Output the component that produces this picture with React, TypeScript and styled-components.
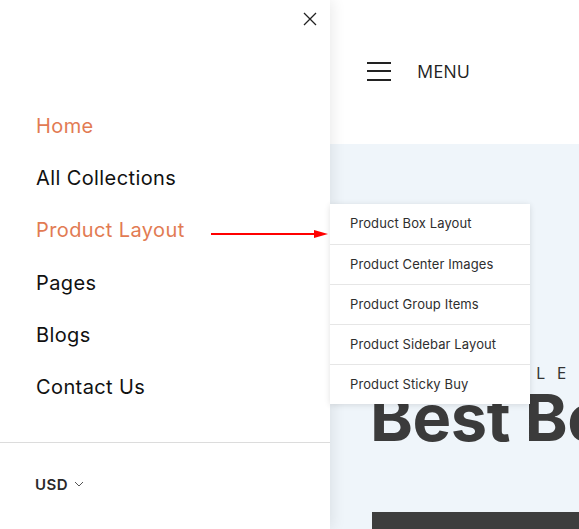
import React from "react";
import styled, { createGlobalStyle } from "styled-components";

const Global = createGlobalStyle`
  html, body { margin: 0; padding: 0; }
  body { width: 579px; height: 529px; overflow: hidden; background: #fff; }
  * { box-sizing: border-box; }
`;

const Page = styled.div`
  position: relative;
  width: 579px;
  height: 529px;
  overflow: hidden;
  display: flex;
  flex-direction: column;
`;

const SiteHeader = styled.header`
  height: 144px;
  flex: none;
  display: flex;
  align-items: center;
  padding: 0 0 2px 367px;
  gap: 26px;
  background: #fff;
`;

const Burger = styled.span`
  width: 24px;
  height: 19px;
  display: flex;
  flex-direction: column;
  justify-content: space-between;
  & > i {
    display: block;
    height: 2px;
    background: #222;
  }
`;

const MenuLabel = styled.span`
  font-family: "Open Sans", sans-serif;
  font-size: 18px;
  color: #222;
  line-height: 1;
`;

const Hero = styled.section`
  flex: 1;
  background: #eff5fa;
  display: flex;
  flex-direction: column;
  padding: 219px 0 0 370px;
`;

const Kicker = styled.div`
  align-self: flex-start;
  margin-left: 166px;
  font-family: "Open Sans", sans-serif;
  font-size: 17px;
  letter-spacing: 12px;
  color: #333;
  line-height: 20px;
  white-space: nowrap;
`;

const HeroTitle = styled.h1`
  margin: 0;
  font-family: "Inter", sans-serif;
  font-weight: 700;
  font-size: 65px;
  letter-spacing: -0.5px;
  line-height: 70px;
  color: #3b3b3b;
  white-space: nowrap;
`;

const HeroButton = styled.div`
  margin: 59px 0 0 2px;
  height: 40px;
  width: 240px;
  background: #3e3e3e;
`;

const Drawer = styled.aside`
  position: absolute;
  left: 0;
  top: 0;
  width: 330px;
  height: 529px;
  background: #fff;
  box-shadow: 2px 0 14px rgba(0, 0, 0, 0.09);
  display: flex;
  flex-direction: column;
`;

const CloseRow = styled.div`
  height: 99.5px;
  display: flex;
  justify-content: flex-end;
  padding: 12px 13px 0 0;
`;

const CloseBtn = styled.span`
  width: 14px;
  height: 14px;
  display: block;
`;

const NavList = styled.nav`
  display: flex;
  flex-direction: column;
  padding-left: 36px;
  flex: 1;
`;

const NavItem = styled.a<{ $active?: boolean }>`
  display: block;
  height: 52.4px;
  line-height: 52.4px;
  font-family: "Inter", sans-serif;
  font-size: 20px;
  letter-spacing: 0.4px;
  color: ${(p) => (p.$active ? "#e27b53" : "#111")};
  text-decoration: none;
  white-space: nowrap;
`;

const Footer = styled.div`
  height: 87px;
  border-top: 1px solid #dcdcdc;
  display: flex;
  align-items: center;
  padding: 0 0 4px 35px;
  gap: 6px;
  font-family: "Inter", sans-serif;
  font-weight: 600;
  font-size: 15px;
  color: #2a2a2a;
  letter-spacing: 0.5px;
`;

const Dropdown = styled.ul`
  position: absolute;
  left: 330px;
  top: 204px;
  width: 200px;
  margin: 0;
  padding: 0;
  list-style: none;
  background: #fff;
  box-shadow: 0 1px 6px rgba(0, 0, 0, 0.12);
`;

const DropItem = styled.li`
  height: 40px;
  display: flex;
  align-items: center;
  padding: 0 0 2px 20px;
  font-family: "Inter", sans-serif;
  font-size: 13px;
  letter-spacing: 0.1px;
  color: #2e2e2e;
  & + & {
    border-top: 1px solid #e6e6e6;
  }
`;

const Arrow = styled.svg`
  position: absolute;
  left: 210px;
  top: 228px;
`;

const nav = [
  { label: "Home", active: true },
  { label: "All Collections" },
  { label: "Product Layout", active: true },
  { label: "Pages" },
  { label: "Blogs" },
  { label: "Contact Us" },
];

const sub = [
  "Product Box Layout",
  "Product Center Images",
  "Product Group Items",
  "Product Sidebar Layout",
  "Product Sticky Buy",
];

export default function App() {
  return (
    <Page>
      <Global />
      <SiteHeader>
        <Burger>
          <i />
          <i />
          <i />
        </Burger>
        <MenuLabel>MENU</MenuLabel>
      </SiteHeader>
      <Hero>
        <Kicker>LE</Kicker>
        <HeroTitle>Best Beauty</HeroTitle>
        <HeroButton />
      </Hero>

      <Drawer>
        <CloseRow>
          <CloseBtn>
            <svg width="14" height="14" viewBox="0 0 14 14">
              <path d="M1 1 L13 13 M13 1 L1 13" stroke="#222" strokeWidth="1.3" fill="none" />
            </svg>
          </CloseBtn>
        </CloseRow>
        <NavList>
          {nav.map((n) => (
            <NavItem key={n.label} $active={n.active}>
              {n.label}
            </NavItem>
          ))}
        </NavList>
        <Footer>
          USD
          <svg width="10" height="6" viewBox="0 0 10 6">
            <path d="M1 1 L5 5 L9 1" stroke="#555" strokeWidth="1" fill="none" />
          </svg>
        </Footer>
      </Drawer>

      <Arrow width="120" height="12" viewBox="0 0 120 12">
        <line x1="1" y1="6" x2="106" y2="6" stroke="#f00" strokeWidth="2" />
        <path d="M104 2 L118 6 L104 10 Z" fill="#f00" />
      </Arrow>

      <Dropdown>
        {sub.map((s) => (
          <DropItem key={s}>{s}</DropItem>
        ))}
      </Dropdown>
    </Page>
  );
}
